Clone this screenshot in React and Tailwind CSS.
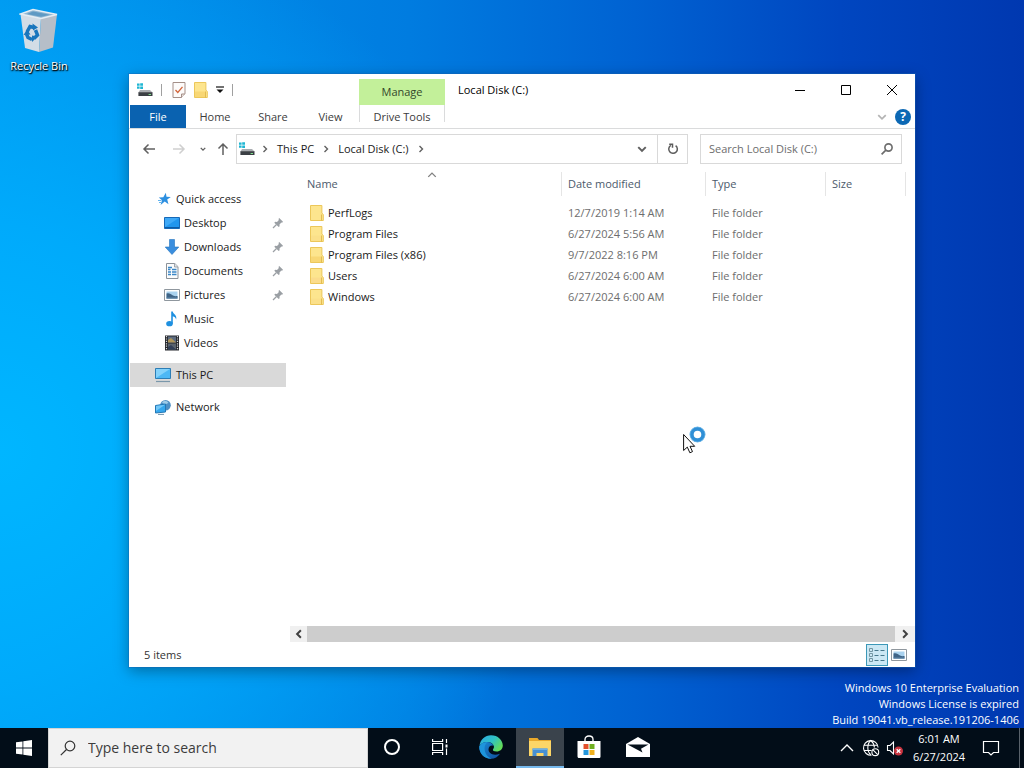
// src/App.jsx
import clsx from 'clsx';

/* ---------- icons ---------- */

function DriveIcon({ className = 'w-4 h-4' }) {
  return (
    <svg viewBox="0 0 16 16" className={className} aria-hidden="true">
      <path d="M0 1.500h2.600v2.300H0zM3.200 1.200H6v2.600H3.200zM0 4.400h2.600v2.400H0zM3.200 4.400H6v2.600H3.200z" fill="#1fb6d3" />
      <path d="M3 8h10l2.500 2.400H1.400z" fill="#a9adb1" />
      <path d="M1.400 10.200h14.100V14H1.400z" fill="#3b3f44" />
      <path d="M11.600 12h2.400v1h-2.400z" fill="#7ee08a" />
    </svg>
  );
}

function FolderIcon({ shade = '#f8d775' }) {
  return (
    <svg viewBox="0 0 14 16" className="w-3.5 h-4 shrink-0" aria-hidden="true">
      <path d="M.5.5h11.400v7.700l1.400 1.200v6.100H.5z" fill="#fde58e" stroke="#ecc75a" />
      <path d="M1 9.500h10.400V15H1z" fill={shade} />
      <path d="M11.500 9.500v6" stroke="#dcb345" strokeWidth=".8" />
    </svg>
  );
}

function PropertiesIcon() {
  return (
    <svg viewBox="0 0 14 16" className="w-3.5 h-4" aria-hidden="true">
      <path d="M1 .5h12v11L9.500 15.500H1z" fill="#fdfbfa" stroke="#a48f88" />
      <path d="M9.500 15.500v-3.500H13" fill="#e9dfdb" stroke="#a48f88" />
      <path d="M3.500 8l2.300 2.500 4.700-5.700" fill="none" stroke="#d2643a" strokeWidth="1.300" />
    </svg>
  );
}

function Chevron({ dir = 'right', className = 'w-2 h-2', width = 1.4 }) {
  const paths = {
    right: 'M2.500 1l3 3-3 3',
    left: 'M5.500 1l-3 3 3 3',
    down: 'M1 2.500l3 3 3-3',
    up: 'M1 5.500l3-3 3 3',
  };
  return (
    <svg viewBox="0 0 8 8" className={className} fill="none" stroke="currentColor" strokeWidth={width} aria-hidden="true">
      <path d={paths[dir]} />
    </svg>
  );
}

function Arrow({ dir }) {
  const paths = {
    left: 'M13 7H2M6.500 2.500L2 7l4.500 4.500',
    right: 'M1 7h11M7.500 2.500L12 7l-4.500 4.500',
    up: 'M7 13V2M2.500 6.500L7 2l4.500 4.500',
  };
  return (
    <svg viewBox="0 0 14 14" className="w-3.5 h-3.5" fill="none" stroke="currentColor" strokeWidth="1.500" aria-hidden="true">
      <path d={paths[dir]} />
    </svg>
  );
}

function Magnifier({ className, width = 1.8 }) {
  return (
    <svg viewBox="0 0 16 16" className={className} fill="none" stroke="currentColor" strokeWidth={width} aria-hidden="true">
      <circle cx="10" cy="6" r="4.800" />
      <path d="M6.500 9.500L.8 15.200" />
    </svg>
  );
}

function PinIcon() {
  return (
    <svg viewBox="0 0 12 12" className="w-3 h-3 text-[#9a9fa4]" aria-hidden="true">
      <path d="M7.200 1l3.800 3.800-.9.900-.7-.2-1.900 1.900.1 1.800-.9.900L2.300 5.700l.9-.9 1.800.1 1.900-1.900-.4-1z" fill="currentColor" />
      <path d="M4.500 7.500L1 11" stroke="currentColor" strokeWidth="1.200" />
    </svg>
  );
}

function RefreshIcon() {
  return (
    <svg viewBox="0 0 12 12" className="w-3 h-3" fill="none" stroke="#5c5c5c" strokeWidth="1.500" aria-hidden="true">
      <path d="M8.600 2.600A4.300 4.300 0 1 1 3.800 2.400" />
      <path d="M2.200 1.200h3.300v3.500" />
    </svg>
  );
}

function StarIcon() {
  return (
    <svg viewBox="0 0 16 16" className="w-4 h-4" aria-hidden="true">
      <path d="M9.800 1.800l.7 3.900 4.300.3-3.600 2.500 1.300 4.800-3.800-2.700L4.600 14l1.400-4.700-3.200-2.700 4.500-.4z" fill="#2d8fe0" />
      <path d="M2 9.500h3.500M3 11.500h2.500" stroke="#63b4ef" strokeWidth="1" />
    </svg>
  );
}

function DesktopIcon() {
  return (
    <svg viewBox="0 0 16 16" className="w-4 h-4" aria-hidden="true">
      <path d="M.5 2.500h15v11H.5z" fill="#2196ee" stroke="#1669b8" />
      <path d="M1 3h14L1 12z" fill="#3fa9f7" />
      <path d="M1 12h14v1H1z" fill="#0d5ba5" />
    </svg>
  );
}

function DownloadsIcon() {
  return (
    <svg viewBox="0 0 16 16" className="w-4 h-4" aria-hidden="true">
      <path d="M5.500.5h5V8h4.300L8 15.500 1.200 8h4.300z" fill="#3a8ede" stroke="#2473bd" strokeWidth=".6" />
    </svg>
  );
}

function DocumentsIcon() {
  return (
    <svg viewBox="0 0 16 16" className="w-4 h-4" aria-hidden="true">
      <path d="M2.500.5h8.300L14 3.700v11.800H2.500z" fill="#fbfcfd" stroke="#8b9299" />
      <path d="M10.500.5V4H14" fill="#dfe4e8" stroke="#8b9299" strokeWidth=".8" />
      <path d="M4 4.500h4M4 6.500h2.500M8 6.500h4.500M4 9h3M8 9h4.500M4 11.500h3M8 11.500h4.500" stroke="#3b87c8" strokeWidth="1.300" />
    </svg>
  );
}

function PicturesIcon({ className = 'w-4 h-4' }) {
  return (
    <svg viewBox="0 0 16 16" className={className} aria-hidden="true">
      <path d="M.5 2.500h15v11H.5z" fill="#fff" stroke="#8f979e" />
      <path d="M2.500 4.500h11v7h-11z" fill="#a9d2ef" />
      <path d="M2.500 6.500c3-1 4.500 1 6.500 2s3.500.5 4.500.5v2.500h-11z" fill="#3f6486" />
      <path d="M2.500 10.500h11v1h-11z" fill="#5f87a8" />
    </svg>
  );
}

function MusicIcon() {
  return (
    <svg viewBox="0 0 16 16" className="w-4 h-4" aria-hidden="true">
      <ellipse cx="5.500" cy="12.700" rx="3.300" ry="2.600" fill="#1e90e0" />
      <path d="M7.200.5h1.600c.2 2.700 4.700 3.500 3.300 8-.4-1.800-1.700-2.900-3.300-3.300v7.500H7.200z" fill="#1e90e0" />
    </svg>
  );
}

function VideosIcon() {
  return (
    <svg viewBox="0 0 16 16" className="w-4 h-4" aria-hidden="true">
      <path d="M1 .5h14v15H1z" fill="#25272c" />
      <path d="M4 1.500h8v6H4z" fill="#5d6c80" />
      <path d="M4 8.500h8v6H4z" fill="#59636e" />
      <path d="M4 5l3-2 5 4.500H4z" fill="#b0965a" />
      <path d="M4 12l3-2 5 4.500H4z" fill="#303e58" />
      <path d="M2.500 1v14M13.500 1v14" stroke="#d8dadd" strokeWidth="1.200" strokeDasharray="1.200 1.200" />
    </svg>
  );
}

function ThisPcIcon() {
  return (
    <svg viewBox="0 0 18 16" className="w-[18px] h-4" aria-hidden="true">
      <path d="M1.500 1.500h15v10h-15z" fill="#4db8f5" stroke="#2c7db5" />
      <path d="M2 2h14L2 11z" fill="#83d2fb" />
      <path d="M2 14.500h14" stroke="#7a97aa" strokeWidth="1.200" />
    </svg>
  );
}

function NetworkIcon() {
  return (
    <svg viewBox="0 0 18 16" className="w-[18px] h-4" aria-hidden="true">
      <circle cx="11.500" cy="6.300" r="5.300" fill="#4d8fc4" />
      <path d="M8 3.500c2-2.500 5-2 6.500.5-2 .5-3 2.500-6.500-.5z" fill="#9ccbe8" />
      <path d="M1.500 6.500l10-1.500v8l-10 1z" fill="#35a7ee" stroke="#2377b4" />
      <path d="M2 7l9-1.300L2 12z" fill="#74c8f8" />
      <path d="M4 15.400h6" stroke="#6f93ad" />
    </svg>
  );
}

function RecycleBinIcon() {
  return (
    <svg viewBox="0 0 40 46" className="w-10 h-[46px]" aria-hidden="true">
      <path d="M1.500 6L22 10 20 44 6 40z" fill="#d3dde6" />
      <path d="M22 10L38 6.500 34 39.500 20 44z" fill="#b6bec8" />
      <path d="M1.500 6L14 1.500l24 5L22 10.500z" fill="#8fb6d2" stroke="#e4edf4" strokeWidth="1.400" />
      <path d="M8 6l6-2.500L31 6.700l-9 2z" fill="#5f9ac4" />
      <g fill="none" stroke="#1976bd" strokeWidth="3.500">
        <path d="M8 24l3-5.500 4 1" />
        <path d="M16.500 22l2 5-3.500 3.500" />
        <path d="M13 31.500l-4-2-1.500-3.500" />
      </g>
      <path d="M13.500 15.500l5.500 4-5 3zM18.500 28.500l-5.500 5.500v-6.500zM4.500 27l3.500-5.500 3.500 5z" fill="#1976bd" />
    </svg>
  );
}

function EdgeIcon() {
  return (
    <svg viewBox="0 0 24 24" className="w-6 h-6" aria-hidden="true">
      <defs>
        <linearGradient id="edgeTop" x1="0" y1="0" x2="1" y2=".6">
          <stop offset="0" stopColor="#2aa6e4" />
          <stop offset=".55" stopColor="#2fc2c6" />
          <stop offset="1" stopColor="#63dc58" />
        </linearGradient>
        <linearGradient id="edgeLow" x1="0" y1="0" x2="1" y2="1">
          <stop offset="0" stopColor="#1b8ad6" />
          <stop offset="1" stopColor="#0f4f9e" />
        </linearGradient>
      </defs>
      <path d="M.5 11C1.200 4.500 6 .2 12 .2c7 0 11.800 5 11.800 10.300 0 3.700-2.800 6-6.200 6-2.700 0-4-1-3.600-2 .8-1.300 1.200-2 .8-3.400C14 8.500 11.500 7 8.500 7 4.500 7 1.500 9 .5 11z" fill="url(#edgeTop)" />
      <path d="M.3 11.500C1.800 8.500 5 6.800 8.500 7c3 .1 5.400 1.600 6.200 4-2.300-1.300-5.200.3-5.200 3.500 0 3.600 4.400 7 11.500 4.200-2 3-5.300 5.100-9 5.100C5.300 23.800 0 18.500.3 11.500z" fill="url(#edgeLow)" />
      <path d="M8.300 7.200C5.500 9.500 5 13 6 16.500c1 3.500 3.300 6 6.500 7.200C5.500 24 0 18.500.3 11.500 1.800 8.500 5 7 8.300 7.200z" fill="#1e95dc" />
    </svg>
  );
}

function ExplorerIcon() {
  return (
    <svg viewBox="0 0 24 20" className="w-6 h-5" aria-hidden="true">
      <path d="M1 1h8.500l1.500 2h12v5H1z" fill="#e9a92b" />
      <path d="M1 4h22v15H1z" fill="#fcd667" />
      <path d="M4.500 19v-7.500h15V19h-4v-3h-7v3z" fill="#4790d2" />
      <path d="M4.500 11.500h15v1.500h-15z" fill="#6fb1e4" />
    </svg>
  );
}

function StoreIcon() {
  return (
    <svg viewBox="0 0 24 24" className="w-6 h-6" aria-hidden="true">
      <path d="M8 7V4.500C8 2.500 9.500 1 12 1s4 1.500 4 3.500V7" fill="none" stroke="#fff" strokeWidth="1.300" />
      <path d="M.5 6h23v15.500c0 1-.7 1.500-1.500 1.500H2c-.9 0-1.500-.6-1.500-1.500z" fill="#fff" />
      <path d="M6.500 9h5v5h-5z" fill="#e2502c" />
      <path d="M12.500 9h5v5h-5z" fill="#6faf20" />
      <path d="M6.500 15h5v5h-5z" fill="#2496dc" />
      <path d="M12.500 15h5v5h-5z" fill="#efb01e" />
    </svg>
  );
}

function MailIcon() {
  return (
    <svg viewBox="0 0 24 20" className="w-6 h-5" aria-hidden="true">
      <path d="M0 7L12 0l12 7v13H0z" fill="#fff" />
      <path d="M1.500 7.500h21l-7.500 4.300 1.500 3.700z" fill="#07121c" />
    </svg>
  );
}

function TaskViewIcon() {
  return (
    <svg viewBox="0 0 18 18" className="w-[18px] h-[18px]" fill="none" stroke="#fff" strokeWidth="1.200" aria-hidden="true">
      <path d="M1.600 5.500h10v7h-10zM1.600 1v2.500h10V1M1.600 17v-2.500h10V17" />
      <path d="M15.500 1v4M15.500 10.500V17" />
      <path d="M14.500 6.500h2v3h-2z" fill="#fff" stroke="none" />
    </svg>
  );
}

function GlobeIcon() {
  return (
    <svg viewBox="0 0 18 18" className="w-[18px] h-[18px]" fill="none" stroke="#fff" strokeWidth="1.100" aria-hidden="true">
      <path d="M9.500 16.200A7.300 7.300 0 1 1 16.100 8.500" />
      <path d="M9 15.800C4.800 13 4.800 4.500 8.800 1.500c2.200 1.700 3.400 4 3.600 7M2 6.300h13.500M2 11.500h7.500" />
      <circle cx="13.300" cy="13.200" r="3.400" />
      <path d="M11 10.900l4.700 4.700" />
    </svg>
  );
}

function SpeakerIcon() {
  return (
    <svg viewBox="0 0 18 18" className="w-[18px] h-[18px]" aria-hidden="true">
      <path d="M1.500 6.500H4L7.500 3v12L4 11.500H1.500z" fill="none" stroke="#fff" strokeWidth="1.100" />
      <circle cx="12.500" cy="12" r="4.500" fill="#c8333f" />
      <path d="M10.700 10.200l3.600 3.600m0-3.600l-3.600 3.600" stroke="#fff" strokeWidth="1.300" />
    </svg>
  );
}

function BusyCursor() {
  return (
    <svg viewBox="0 0 24 28" className="w-6 h-7" aria-hidden="true">
      <circle cx="14.500" cy="8.500" r="5.800" fill="#fff" stroke="#2f8fd6" strokeWidth="4" />
      <circle cx="14.500" cy="8.500" r="7.500" fill="none" stroke="#7cc3ee" strokeWidth=".6" />
      <path d="M.6 8.500v16l3.700-3.400 2.600 5.700 2.600-1.200-2.500-5.300h4.700z" fill="#fff" stroke="#111" />
    </svg>
  );
}

/* ---------- data ---------- */

const quickAccess = [
  { label: 'Desktop', Icon: DesktopIcon, pinned: true },
  { label: 'Downloads', Icon: DownloadsIcon, pinned: true },
  { label: 'Documents', Icon: DocumentsIcon, pinned: true },
  { label: 'Pictures', Icon: PicturesIcon, pinned: true },
  { label: 'Music', Icon: MusicIcon },
  { label: 'Videos', Icon: VideosIcon },
];

const files = [
  { name: 'PerfLogs', modified: '12/7/2019 1:14 AM', shade: '#fde58e' },
  { name: 'Program Files', modified: '6/27/2024 5:56 AM', shade: '#fbe08a' },
  { name: 'Program Files (x86)', modified: '9/7/2022 8:16 PM', shade: '#f8d775' },
  { name: 'Users', modified: '6/27/2024 6:00 AM', shade: '#fbdc8c' },
  { name: 'Windows', modified: '6/27/2024 6:00 AM', shade: '#fbe08a' },
];

/* ---------- window parts ---------- */

function TitleBar() {
  return (
    <div className="flex h-[31px] items-stretch">
      <div className="flex w-[230px] items-center pl-2">
        <DriveIcon />
        <span className="ml-2 h-3 border-l border-[#a0a0a0]" />
        <button aria-label="Properties" className="ml-2.5"><PropertiesIcon /></button>
        <button aria-label="New folder" className="ml-2"><FolderIcon /></button>
        <button aria-label="Customize Quick Access Toolbar" className="ml-2">
          <svg viewBox="0 0 8 8" className="w-2 h-2" aria-hidden="true">
            <path d="M0 1h8" stroke="#111" strokeWidth="1.200" />
            <path d="M.5 3.500h7L4 7z" fill="#111" />
          </svg>
        </button>
        <span className="ml-2 h-3 border-l border-[#a0a0a0]" />
      </div>
      <div className="mt-[5px] flex w-[86px] items-center justify-center bg-[#c3f09a] text-[#33472b]">Manage</div>
      <h1 className="flex flex-1 items-center pl-[13px] text-black">Local Disk (C:)</h1>
      <div className="flex text-black">
        <button aria-label="Minimize" className="flex w-[46px] items-center justify-center">
          <svg viewBox="0 0 10 10" className="w-2.5 h-2.5" stroke="currentColor" aria-hidden="true"><path d="M0 5.500h10" /></svg>
        </button>
        <button aria-label="Maximize" className="flex w-[46px] items-center justify-center">
          <svg viewBox="0 0 10 10" className="w-2.5 h-2.5" fill="none" stroke="currentColor" aria-hidden="true"><path d="M.5.5h9v9h-9z" /></svg>
        </button>
        <button aria-label="Close" className="flex w-[46px] items-center justify-center">
          <svg viewBox="0 0 10 10" className="w-2.5 h-2.5" fill="none" stroke="currentColor" aria-hidden="true"><path d="M0 0l10 10M10 0L0 10" /></svg>
        </button>
      </div>
    </div>
  );
}

function RibbonTabs() {
  return (
    <div className="flex h-6 items-stretch border-b border-[#dadbdc] pl-px text-[#3c3c3c]">
      <button className="w-14 bg-[#0a62b0] text-white">File</button>
      <button className="w-[58px]">Home</button>
      <button className="w-[58px]">Share</button>
      <button className="w-[57px]">View</button>
      <button className="mb-1.5 w-[86px] border-x border-[#dadbdc] pt-1 leading-4">Drive Tools</button>
      <div className="flex flex-1 items-center justify-end gap-2 pr-1">
        <button aria-label="Expand the Ribbon" className="text-[#b4b4b4]"><Chevron dir="down" className="w-2.5 h-2.5" /></button>
        <button aria-label="Help" className="flex h-4 w-4 items-center justify-center rounded-full bg-[#0c68b4] text-xs font-bold leading-none text-white">?</button>
      </div>
    </div>
  );
}

function AddressRow() {
  return (
    <div className="flex items-center py-[5px] pr-[13px] pl-[13px]">
      <div className="flex w-[94px] items-center text-[#606060]">
        <button aria-label="Back"><Arrow dir="left" /></button>
        <button aria-label="Forward" className="ml-4 text-[#cfcfcf]"><Arrow dir="right" /></button>
        <button aria-label="Recent locations" className="ml-3.5"><Chevron dir="down" className="w-1.5 h-1.5" width={1.8} /></button>
        <button aria-label="Up" className="ml-2.5"><Arrow dir="up" /></button>
      </div>
      <div className="flex h-[30px] flex-1 items-stretch border border-[#d9d9d9]">
        <div className="flex flex-1 items-center pl-0.5 text-[#1a1a1a]">
          <DriveIcon />
          <span className="ml-1.5 text-[#606060]"><Chevron /></span>
          <button className="ml-2">This PC</button>
          <span className="ml-2 text-[#606060]"><Chevron /></span>
          <button className="ml-2">Local Disk (C:)</button>
          <span className="ml-2 text-[#606060]"><Chevron /></span>
        </div>
        <button aria-label="Previous locations" className="px-2.5 text-[#606060]"><Chevron dir="down" className="w-2.5 h-2.5" width={1.6} /></button>
        <button aria-label="Refresh" className="flex w-[30px] items-center justify-center border-l border-[#d9d9d9]"><RefreshIcon /></button>
      </div>
      <label className="ml-3 flex h-[30px] w-[202px] items-center border border-[#d9d9d9] pr-2 pl-2 text-[#6d6d6d]">
        <input aria-label="Search Local Disk (C:)" placeholder="Search Local Disk (C:)" className="w-0 flex-1 bg-transparent outline-none placeholder:text-[#6d6d6d]" />
        <Magnifier className="w-3 h-3" width={2.2} />
      </label>
    </div>
  );
}

function NavRow({ label, Icon, nested, pinned, selected }) {
  return (
    <li>
      <a
        href="#"
        className={clsx(
          'flex h-6 items-center pr-0.5 text-[#1a1a1a]',
          nested ? 'gap-1 pl-8' : 'gap-1 pl-6',
          selected && 'bg-[#d9d9d9]'
        )}
      >
        <span className="flex w-[18px] shrink-0 justify-end"><Icon /></span>
        <span className="flex-1">{label}</span>
        {pinned && <PinIcon />}
      </a>
    </li>
  );
}

function NavPane() {
  return (
    <nav className="w-[157px] shrink-0 pt-[18px] pl-px">
      <ul>
        <NavRow label="Quick access" Icon={StarIcon} />
        {quickAccess.map((item) => (
          <NavRow key={item.label} nested {...item} />
        ))}
      </ul>
      <ul className="mt-2 flex flex-col gap-2">
        <NavRow label="This PC" Icon={ThisPcIcon} selected />
        <NavRow label="Network" Icon={NetworkIcon} />
      </ul>
    </nav>
  );
}

function HeaderCell({ label, sorted }) {
  return (
    <th className="relative p-0 pb-1.5 text-left font-normal">
      {sorted && <span className="absolute inset-x-0 -top-0.5 flex justify-center text-[#808080]"><Chevron dir="up" className="w-2.5 h-2.5" width={1.1} /></span>}
      <div className="flex h-6 items-center border-r border-[#e5e5e5] pl-1.5 text-[#4c5a6b]">{label}</div>
    </th>
  );
}

function FileList() {
  return (
    <div className="flex min-w-0 flex-1 flex-col pl-1">
      <div className="flex-1 overflow-hidden pt-[3px] pl-[11px]">
        <table className="w-[605px] table-fixed">
          <colgroup>
            <col className="w-[261px]" />
            <col className="w-[144px]" />
            <col className="w-[120px]" />
            <col />
          </colgroup>
          <thead>
            <tr>
              <HeaderCell label="Name" sorted />
              <HeaderCell label="Date modified" />
              <HeaderCell label="Type" />
              <HeaderCell label="Size" />
            </tr>
          </thead>
          <tbody>
            {files.map((f) => (
              <tr key={f.name} className="h-[21px] text-[#6d6d6d]">
                <td className="p-0">
                  <div className="flex items-center gap-1 pl-[9px] text-[#1a1a1a]">
                    <FolderIcon shade={f.shade} />
                    {f.name}
                  </div>
                </td>
                <td className="p-0 pl-1.5">{f.modified}</td>
                <td className="p-0 pl-1.5">File folder</td>
                <td className="p-0" />
              </tr>
            ))}
          </tbody>
        </table>
      </div>
      <div className="flex h-4 items-stretch bg-[#f0f0f0] text-[#404040]">
        <button aria-label="Scroll left" className="flex w-[17px] items-center justify-center"><Chevron dir="left" className="w-2.5 h-2.5" width={1.6} /></button>
        <div className="flex-1 bg-[#cdcdcd]" />
        <button aria-label="Scroll right" className="flex w-5 items-center justify-center"><Chevron className="w-2.5 h-2.5" width={1.6} /></button>
      </div>
    </div>
  );
}

function StatusBar() {
  return (
    <div className="flex h-[25px] items-center justify-between pr-2 pl-[15px] text-[#333]">
      <span>5 items</span>
      <div className="flex items-center gap-[3px]">
        <button aria-label="Details view" className="flex h-[22px] w-[22px] items-center justify-center border border-[#3c98b8] bg-[#cbe8f4]">
          <svg viewBox="0 0 18 16" className="w-[18px] h-4" fill="none" stroke="#47788c" aria-hidden="true">
            <path d="M1.500 1.500h3v3h-3zM1.500 6.500h3v3h-3zM1.500 11.500h3v3h-3z" stroke="#7396a3" />
            <path d="M6.500 3.500h4M12.500 3.500h4M6.500 8.500h4M12.500 8.500h4M6.500 13.500h4M12.500 13.500h4" />
          </svg>
        </button>
        <button aria-label="Large icons view"><PicturesIcon /></button>
      </div>
    </div>
  );
}

function ExplorerWindow() {
  return (
    <section className="absolute top-[74px] right-[109px] bottom-[61px] left-[129px] flex flex-col bg-white shadow-[0_0_0_1px_rgba(20,100,180,0.4),0_4px_14px_rgba(0,0,0,0.35)]">
      <TitleBar />
      <RibbonTabs />
      <AddressRow />
      <div className="flex min-h-0 flex-1">
        <NavPane />
        <FileList />
      </div>
      <StatusBar />
    </section>
  );
}

/* ---------- taskbar ---------- */

function TaskButton({ label, active, children }) {
  return (
    <button
      aria-label={label}
      className={clsx(
        'flex w-12 items-center justify-center border-b-2',
        active ? 'border-[#76b9ed] bg-[#3a434c]' : 'border-transparent'
      )}
    >
      {children}
    </button>
  );
}

function Taskbar() {
  return (
    <footer className="flex h-10 items-stretch bg-[#020d18] text-white">
      <button aria-label="Start" className="flex w-12 items-center justify-center">
        <svg viewBox="0 0 16 16" className="w-4 h-4" fill="#fff" aria-hidden="true">
          <path d="M0 2.300l6.500-.9v6.200H0zM7.300 1.300L16 0v7.600H7.300zM0 8.400h6.500v6.200L0 13.700zM7.300 8.400H16V16l-8.700-1.300z" />
        </svg>
      </button>
      <label className="flex w-80 items-center gap-3 border border-[#d4d4d4] bg-[#f2f2f2] pl-[11px] text-[#333]">
        <Magnifier className="w-4 h-4" width={1.2} />
        <input aria-label="Type here to search" placeholder="Type here to search" className="w-0 flex-1 bg-transparent text-sm outline-none placeholder:text-[#3c3c3c]" />
      </label>
      <TaskButton label="Cortana">
        <span className="h-4 w-4 rounded-full border-2 border-white" />
      </TaskButton>
      <TaskButton label="Task View"><TaskViewIcon /></TaskButton>
      <div className="flex gap-px pl-[3px]">
        <TaskButton label="Microsoft Edge"><EdgeIcon /></TaskButton>
        <TaskButton label="File Explorer" active><ExplorerIcon /></TaskButton>
        <TaskButton label="Microsoft Store"><StoreIcon /></TaskButton>
        <TaskButton label="Mail"><MailIcon /></TaskButton>
      </div>
      <div className="ml-auto flex items-stretch">
        <button aria-label="Show hidden icons" className="flex w-6 items-center justify-center"><Chevron dir="up" className="w-4 h-4" width={0.7} /></button>
        <button aria-label="No Internet access" className="flex w-6 items-center justify-center"><GlobeIcon /></button>
        <button aria-label="Speakers: muted" className="flex w-6 items-center justify-center"><SpeakerIcon /></button>
        <button className="w-[60px] pl-1 text-center leading-[18px]">
          <time dateTime="2024-06-27T06:01">6:01 AM<br />6/27/2024</time>
        </button>
        <button aria-label="Notifications" className="mr-1 flex w-12 items-center justify-center">
          <svg viewBox="0 0 18 18" className="w-[18px] h-[18px]" fill="none" stroke="#fff" strokeWidth="1.200" aria-hidden="true">
            <path d="M1.500 2.500h15v11h-5L9 16l-2.500-2.500h-5z" />
          </svg>
        </button>
        <button aria-label="Show desktop" className="w-[5px] border-l border-[#59616a]" />
      </div>
    </footer>
  );
}

export default function App() {
  return (
    <div className="flex h-screen flex-col overflow-hidden font-['Open_Sans',sans-serif] text-[11px] leading-4">
      <main className="relative flex-1 bg-[radial-gradient(ellipse_55%_75%_at_0%_62%,#00b6ff_0%,#00b0ffcc_40%,#00a0ff00_100%),linear-gradient(to_right,#0096ee_0%,#007ce0_40%,#0062d2_62%,#0046c0_82%,#0038b0_100%)]">
        <button className="mt-2 ml-px flex w-[76px] flex-col items-center gap-1 text-white [text-shadow:0_1px_2px_#000,1px_1px_1px_#000]">
          <RecycleBinIcon />
          Recycle Bin
        </button>

        <p className="absolute right-[5px] bottom-0 text-right text-white">
          Windows 10 Enterprise Evaluation<br />
          Windows License is expired<br />
          Build 19041.vb_release.191206-1406
        </p>

        <ExplorerWindow />

        <div className="pointer-events-none absolute top-[426px] left-[683px]">
          <BusyCursor />
        </div>
      </main>
      <Taskbar />
    </div>
  );
}
